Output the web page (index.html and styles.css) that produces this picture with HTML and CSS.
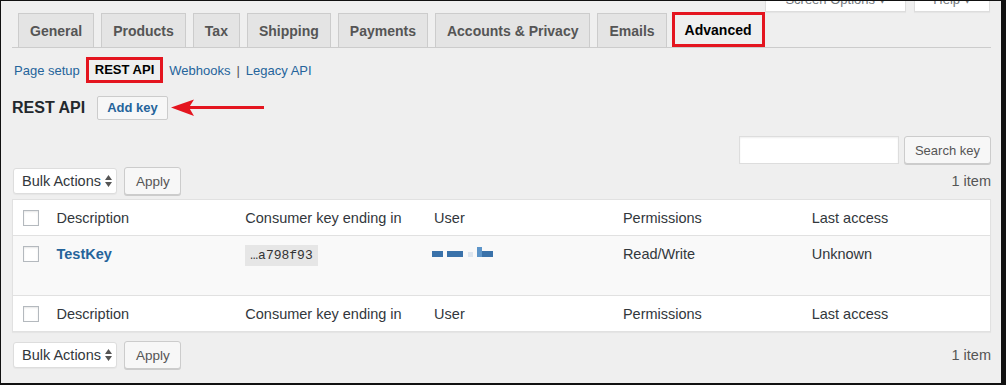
FILE: index.html
```html
<!DOCTYPE html>
<html lang="en">
<head>
  <meta charset="UTF-8">
  <title>Advanced – REST API</title>
  <link rel="stylesheet" href="styles.css">
</head>
<body>
  <div class="frame">
    <div class="wrap">
      <div class="screen-meta">
        <button class="meta-btn meta-screen">Screen Options ▾</button>
        <button class="meta-btn meta-help">Help ▾</button>
      </div>

      <nav class="tabs">
        <a class="tab">General</a>
        <a class="tab">Products</a>
        <a class="tab">Tax</a>
        <a class="tab">Shipping</a>
        <a class="tab">Payments</a>
        <a class="tab">Accounts &amp; Privacy</a>
        <a class="tab">Emails</a>
        <a class="tab active">Advanced</a>
      </nav>

      <ul class="subnav">
        <li><a href="#">Page setup</a></li>
        <li class="current">REST API</li>
        <li class="next"><a href="#">Webhooks</a></li>
        <li class="sep">|</li>
        <li><a href="#">Legacy API</a></li>
      </ul>

      <div class="title-row">
        <h1>REST API</h1>
        <a class="page-action" href="#">Add key</a>
        <svg class="arrow" width="94" height="18" viewBox="0 0 94 18">
          <path d="M0 8.5 L23 0.5 L18 8.5 L23 17 Z" fill="#e4151f"/>
          <rect x="16" y="7" width="77" height="3" fill="#e4151f"/>
        </svg>
      </div>

      <div class="search-row">
        <input class="search-input" type="text">
        <button class="btn">Search key</button>
      </div>

      <div class="tablenav">
        <div class="actions">
          <div class="select">Bulk Actions
            <svg width="7" height="12" viewBox="0 0 7 12"><path d="M0 5 L3.5 0 L7 5 Z M0 7 L3.5 12 L7 7 Z" fill="#555"/></svg>
          </div>
          <button class="btn">Apply</button>
        </div>
        <span class="count">1 item</span>
      </div>

      <table class="keys">
        <colgroup>
          <col class="col-cb">
          <col><col><col><col><col>
        </colgroup>
        <thead>
          <tr>
            <th class="cb-cell"><span class="cb"></span></th>
            <th>Description</th>
            <th>Consumer key ending in</th>
            <th>User</th>
            <th>Permissions</th>
            <th>Last access</th>
          </tr>
        </thead>
        <tbody>
          <tr>
            <td class="cb-cell"><span class="cb"></span></td>
            <td><a class="row-title" href="#">TestKey</a></td>
            <td><code>…a798f93</code></td>
            <td>
              <div class="user-blur">
                <i class="b1"></i><i class="b2"></i><i class="b3"></i><i class="b4"></i><i class="b5"></i>
              </div>
            </td>
            <td>Read/Write</td>
            <td>Unknown</td>
          </tr>
        </tbody>
        <tfoot>
          <tr>
            <th class="cb-cell"><span class="cb"></span></th>
            <th>Description</th>
            <th>Consumer key ending in</th>
            <th>User</th>
            <th>Permissions</th>
            <th>Last access</th>
          </tr>
        </tfoot>
      </table>

      <div class="tablenav bottom">
        <div class="actions">
          <div class="select">Bulk Actions
            <svg width="7" height="12" viewBox="0 0 7 12"><path d="M0 5 L3.5 0 L7 5 Z M0 7 L3.5 12 L7 7 Z" fill="#555"/></svg>
          </div>
          <button class="btn">Apply</button>
        </div>
        <span class="count">1 item</span>
      </div>
    </div>
  </div>
</body>
</html>
```

FILE: styles.css
```css
* { margin: 0; padding: 0; box-sizing: border-box; }
body {
  background: #111;
  font-family: "Liberation Sans", Arial, sans-serif;
  color: #32373c;
}
.frame {
  width: 1000px;
  height: 382px;
  margin: 1px 0 0 1px;
  background: #efefef;
  overflow: hidden;
}
.wrap {
  padding: 0 10px 0 11px;
}

/* screen options / help, cut off at the top */
.screen-meta {
  height: 11px;
  display: flex;
  justify-content: flex-end;
  align-items: flex-end;
  gap: 8px;
  margin-right: 1px;
}
.meta-btn {
  flex-shrink: 0;
  height: 30px;
  padding-top: 6px;
  background: #fff;
  border: 1px solid #ddd;
  border-top: none;
  box-shadow: 0 1px 1px rgba(0,0,0,0.04);
  font-family: inherit;
  font-size: 13px;
  color: #72777c;
}
.meta-screen { width: 141px; }
.meta-help { width: 76px; }

/* tabs */
.tabs {
  display: flex;
  align-items: flex-end;
  gap: 7px;
  padding-left: 6px;
  border-bottom: 1px solid #ccc;
}
.tab {
  height: 34px;
  padding: 0 11px;
  border: 1px solid #ccc;
  border-bottom: none;
  background: #e4e4e4;
  color: #555;
  font-size: 14px;
  font-weight: bold;
  line-height: 34px;
  white-space: nowrap;
}
.tab.active {
  height: 35px;
  margin-left: -2px;
  padding: 0 10px;
  border: 3px solid #e4151f;
  background: #efefef;
  color: #000;
  line-height: 31px;
}

/* sub navigation */
.subnav {
  display: flex;
  align-items: center;
  height: 26px;
  margin: 9px 0 0 2px;
  list-style: none;
  font-size: 13px;
}
.subnav a {
  color: #25649b;
  text-decoration: none;
}
.subnav .current {
  margin-left: 6px;
  padding: 0 6px;
  border: 3px solid #e4151f;
  font-weight: bold;
  color: #000;
  line-height: 20px;
}
.subnav .next { margin-left: 6px; }
.subnav .sep {
  margin: 0 6px;
  color: #555;
}

/* page title */
.title-row {
  display: flex;
  align-items: center;
  height: 24px;
  margin-top: 13px;
}
.title-row h1 {
  font-size: 16px;
  font-weight: bold;
  color: #23282d;
  margin-right: 12px;
}
.page-action {
  height: 24px;
  padding: 0 9px;
  border: 1px solid #ccc;
  border-radius: 2px;
  background: #f7f7f7;
  color: #25649b;
  font-size: 13px;
  font-weight: bold;
  line-height: 22px;
  text-decoration: none;
}
.arrow {
  margin-left: 3px;
}

/* buttons and inputs */
.btn {
  height: 28px;
  padding: 0 11px;
  border: 1px solid #ccc;
  border-radius: 3px;
  background: #f7f7f7;
  box-shadow: 0 1px 0 #ccc;
  font-family: inherit;
  font-size: 13.5px;
  color: #555;
}
.search-row {
  display: flex;
  justify-content: flex-end;
  gap: 5px;
  margin-top: 16px;
}
.search-row .btn {
  padding: 0 10px;
  font-size: 13px;
}
.search-input {
  width: 160px;
  height: 28px;
  border: 1px solid #ddd;
  background: #fff;
  box-shadow: inset 0 1px 2px rgba(0,0,0,0.07);
}

.tablenav {
  display: flex;
  justify-content: space-between;
  align-items: center;
  height: 28px;
  margin-top: 3px;
}
.tablenav.bottom { margin-top: 9px; }
.actions {
  display: flex;
  align-items: center;
  gap: 7px;
  margin-left: 1px;
}
.select {
  display: flex;
  align-items: center;
  justify-content: space-between;
  width: 104px;
  height: 26px;
  padding: 0 4px 0 8px;
  border: 1px solid #ddd;
  border-radius: 3px;
  background: #fff;
  box-shadow: 0 1px 1px rgba(0,0,0,0.04);
  font-size: 14.5px;
  color: #32373c;
  white-space: nowrap;
}
.actions .btn { padding: 0 11px; width: 57px; }
.count {
  font-size: 14.5px;
  color: #555;
}

/* list table */
.keys {
  width: 100%;
  margin-top: 4px;
  border-collapse: collapse;
  table-layout: fixed;
  background: #fff;
  border: 1px solid #e1e1e1;
  box-shadow: 0 1px 1px rgba(0,0,0,0.04);
  font-size: 14.5px;
}
.col-cb { width: 34px; }
.keys th {
  height: 36px;
  padding: 0 10px;
  text-align: left;
  font-weight: normal;
  color: #32373c;
  vertical-align: middle;
}
.keys thead th { border-bottom: 1px solid #e1e1e1; }
.keys tfoot th { border-top: 1px solid #e1e1e1; }
.keys td {
  height: 60px;
  padding: 8px 10px 0;
  vertical-align: top;
  line-height: 20px;
  background: #f9f9f9;
  color: #32373c;
}
.keys .cb-cell { padding-left: 10px; padding-right: 0; }
.cb {
  display: block;
  width: 16px;
  height: 16px;
  border: 1px solid #b4b9be;
  background: #fff;
  box-shadow: inset 0 1px 2px rgba(0,0,0,0.1);
}
.keys td .cb { margin-top: 2px; }
.row-title {
  color: #25649b;
  font-weight: bold;
  text-decoration: none;
}
code {
  display: inline-block;
  padding: 0 5px;
  background: #e6e6e6;
  font-family: "Liberation Mono", monospace;
  font-size: 13px;
  line-height: 21px;
  color: #333;
}
.user-blur {
  display: flex;
  align-items: flex-end;
  height: 13px;
  margin-left: -2px;
}
.user-blur i { display: block; height: 6px; background: #3a72aa; }
.user-blur .b1 { width: 11px; }
.user-blur .b2 { width: 16px; margin-left: 4px; }
.user-blur .b3 { width: 5px; height: 5px; margin-left: 5px; background: #dde5ee; }
.user-blur .b4 { width: 5px; height: 10px; margin-left: 4px; background: #5d95c9; }
.user-blur .b5 { width: 11px; }
```
